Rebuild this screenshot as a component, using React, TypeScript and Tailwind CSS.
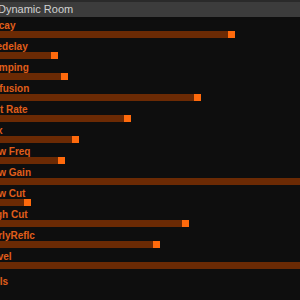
import React from "react";

const rows: { label: string; end: number | null }[] = [
  { label: "Decay", end: 235 },
  { label: "Predelay", end: 58 },
  { label: "Damping", end: 68 },
  { label: "Diffusion", end: 201 },
  { label: "Out Rate", end: 131 },
  { label: "Mix", end: 79 },
  { label: "Low Freq", end: 65 },
  { label: "Low Gain", end: 340 },
  { label: "Low Cut", end: 31 },
  { label: "High Cut", end: 189 },
  { label: "EarlyReflc", end: 160 },
  { label: "Level", end: 340 },
  { label: "Tails", end: null },
];

export default function App() {
  return (
    <div
      className="w-[300px] h-[300px] overflow-hidden bg-[#0e0e0e] flex flex-col"
      style={{ fontFamily: '"Liberation Sans", Arial, sans-serif' }}
    >
      <div className="h-[17px] shrink-0 border-t-2 border-[#2a2a2a] bg-[#3c3c3c] flex items-center">
        <span className="text-[11px] text-[#d2d2d2] ml-[-2px] leading-none">Dynamic Room</span>
      </div>
      <div className="flex flex-col">
        {rows.map((r) => (
          <div key={r.label} className={r.end === null ? "h-[21px] flex flex-col mt-[4px]" : "h-[21px] flex flex-col"}>
            <div className="h-[14px] ml-[-14px] text-[10px] font-bold text-[#e05e1a] leading-[18px] whitespace-nowrap">
              {r.label}
            </div>
            {r.end !== null && (
              <div className="h-[7px] relative">
                <div
                  className="absolute left-0 top-0 h-[7px] bg-[#6b2a04]"
                  style={{ width: r.end - 7 }}
                />
                <div
                  className="absolute top-0 h-[7px] w-[7px] bg-[#ff6a0c]"
                  style={{ left: r.end - 7 }}
                />
              </div>
            )}
          </div>
        ))}
      </div>
    </div>
  );
}
